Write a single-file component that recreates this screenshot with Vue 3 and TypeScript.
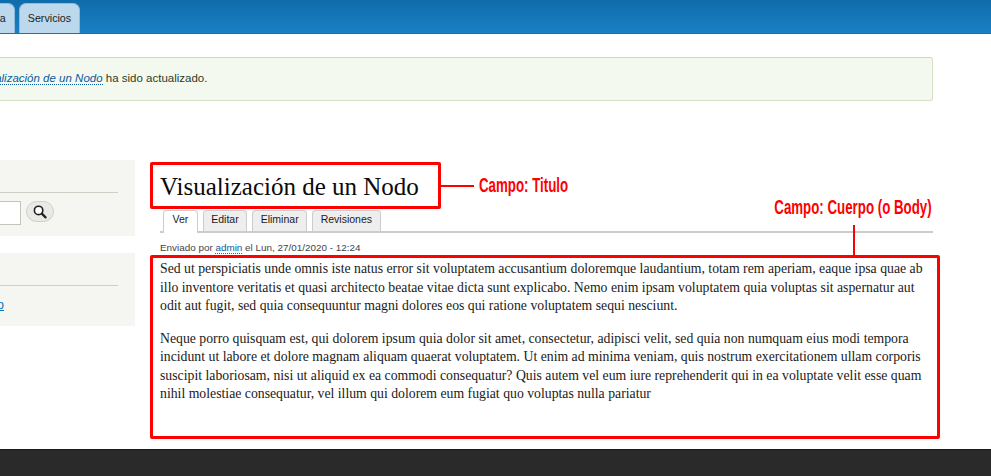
<script setup lang="ts">
const tabs: string[] = ['Ver', 'Editar', 'Eliminar', 'Revisiones']
const p1: string[] = [
  'Sed ut perspiciatis unde omnis iste natus error sit voluptatem accusantium doloremque laudantium, totam rem aperiam, eaque ipsa quae ab',
  'illo inventore veritatis et quasi architecto beatae vitae dicta sunt explicabo. Nemo enim ipsam voluptatem quia voluptas sit aspernatur aut',
  'odit aut fugit, sed quia consequuntur magni dolores eos qui ratione voluptatem sequi nesciunt.'
]
const p2: string[] = [
  'Neque porro quisquam est, qui dolorem ipsum quia dolor sit amet, consectetur, adipisci velit, sed quia non numquam eius modi tempora',
  'incidunt ut labore et dolore magnam aliquam quaerat voluptatem. Ut enim ad minima veniam, quis nostrum exercitationem ullam corporis',
  'suscipit laboriosam, nisi ut aliquid ex ea commodi consequatur? Quis autem vel eum iure reprehenderit qui in ea voluptate velit esse quam',
  'nihil molestiae consequatur, vel illum qui dolorem eum fugiat quo voluptas nulla pariatur'
]
</script>

<template>
  <div class="page">
    <header class="top">
      <nav class="nav">
        <a class="nav-tab">Empresa</a>
        <a class="nav-tab">Servicios</a>
      </nav>
    </header>

    <div class="msg">
      <a class="msg-link">Visualización de un Nodo</a> ha sido actualizado.
    </div>

    <div class="columns">
      <aside class="side">
        <section class="block block-search">
          <div class="rule"></div>
          <div class="search">
            <div class="input"></div>
            <button class="btn" type="button" aria-label="Buscar">
              <svg width="16" height="16" viewBox="0 0 16 16">
                <circle cx="6.6" cy="6.4" r="4.2" fill="#fff" stroke="#222" stroke-width="1.6" />
                <path d="M9.8 9.6 L13.6 13.4" stroke="#222" stroke-width="2.2" stroke-linecap="round" />
              </svg>
            </button>
          </div>
        </section>
        <section class="block block-menu">
          <div class="rule"></div>
          <a class="side-link">Nuevo</a>
        </section>
      </aside>

      <main class="main">
        <div class="title-row">
          <h1 class="title">Visualización de un Nodo</h1>
          <span class="dash"></span>
          <span class="note note-title">Campo: Titulo</span>
        </div>
        <ul class="tabs">
          <li v-for="(t, i) in tabs" :key="t" class="tab" :class="{ active: i === 0 }">{{ t }}</li>
        </ul>
        <div class="meta">Enviado por <a class="author">admin</a> el Lun, 27/01/2020 - 12:24</div>
        <article class="body">
          <p v-for="l in [p1, p2]" :key="l[0]" class="para">
            <span v-for="s in l" :key="s" class="line">{{ s }}</span>
          </p>
        </article>
        <span class="note note-body">Campo: Cuerpo (o Body)</span>
        <span class="stem"></span>
      </main>
    </div>

    <footer class="foot"></footer>
  </div>
</template>

<style>
html, body { margin: 0; background: #fff; overflow: hidden; }
</style>

<style scoped>
.page {
  width: 991px;
  height: 476px;
  overflow: hidden;
  display: flex;
  flex-direction: column;
  font-family: "Liberation Sans", Arial, sans-serif;
  background: #fff;
}
.top {
  height: 34px;
  flex: none;
  box-sizing: border-box;
  background: linear-gradient(#0f6cab, #1a80c3);
  border-bottom: 1px solid #1673b0;
}
.nav {
  display: flex;
  gap: 4px;
  margin-left: -46px;
  padding-top: 3px;
}
.nav-tab {
  box-sizing: border-box;
  height: 30px;
  padding: 8px 8px 0;
  font-size: 10.7px;
  line-height: 13px;
  color: #222;
  background: #bcd8ec;
  border: 1px solid #8fbcdc;
  border-bottom: 0;
  border-radius: 7px 7px 0 0;
}
.msg {
  flex: none;
  box-sizing: border-box;
  margin: 23px 58px 0 -60px;
  height: 44px;
  padding: 13px 0 0 32px;
  font-size: 11.5px;
  line-height: 15px;
  color: #2f3a1e;
  background: #f3f9ef;
  border: 1px solid #d4e0c6;
  border-top-color: #cdd8bf;
  border-radius: 3px;
}
.msg-link {
  color: #0a5aa0;
  font-style: italic;
  border-bottom: 1px dotted #0a5aa0;
}
.columns {
  flex: 1;
  display: flex;
  margin-top: 59px;
  min-height: 0;
}
.side {
  flex: none;
  width: 215px;
  margin-left: -80px;
  display: flex;
  flex-direction: column;
  gap: 17px;
}
.block {
  box-sizing: border-box;
  background: #f5f5f1;
  padding: 32px 17px 0 20px;
}
.block-search { height: 76px; }
.block-menu { height: 73px; }
.rule { height: 1px; background: #cfcfc6; }
.search {
  display: flex;
  align-items: flex-start;
  justify-content: flex-end;
  gap: 5px;
  margin-top: 8px;
}
.input {
  width: 60px;
  height: 24px;
  box-sizing: border-box;
  background: #fff;
  border: 1px solid #c4c4bc;
}
.btn {
  width: 28px;
  height: 21px;
  margin-right: 64px;
  padding: 0;
  display: flex;
  align-items: center;
  justify-content: center;
  background: #e9e9e6;
  border: 1px solid #cfcfca;
  border-radius: 11px;
}
.block-menu .rule { margin-bottom: 11px; }
.side-link {
  display: block;
  text-align: right;
  margin-right: 114px;
  font-size: 13px;
  line-height: 15px;
  color: #0a78c0;
  text-decoration: underline;
}
.main {
  position: relative;
  flex: none;
  width: 790px;
  margin-left: 15px;
}
.title-row {
  display: flex;
  align-items: center;
  margin-top: 2px;
  height: 47px;
}
.title {
  flex: none;
  box-sizing: border-box;
  width: 291px;
  height: 47px;
  margin: 0;
  padding: 7px 0 0 7px;
  border: 3px solid #f00;
  border-radius: 2px;
  font-family: "Liberation Serif", Georgia, serif;
  font-size: 25px;
  line-height: 30px;
  font-weight: 400;
  color: #0a0a0a;
  white-space: nowrap;
}
.dash {
  flex: none;
  width: 33px;
  height: 2px;
  background: #f00;
}
.note {
  font-family: "Liberation Sans", sans-serif;
  font-size: 20px;
  line-height: 23px;
  font-weight: 700;
  color: #f00;
  white-space: nowrap;
}
.note-title {
  margin-left: 5px;
  transform: scaleX(0.665);
  transform-origin: left center;
}
.note-body {
  position: absolute;
  right: 8px;
  top: 36px;
  transform: scaleX(0.665);
  transform-origin: right center;
}
.stem {
  position: absolute;
  left: 703px;
  top: 65px;
  width: 2px;
  height: 30px;
  background: #f00;
}
.tabs {
  list-style: none;
  margin: 1px 0 0 10px;
  width: 773px;
  padding: 0 0 0 3px;
  display: flex;
  gap: 5px;
  box-sizing: border-box;
  height: 23px;
  border-bottom: 2px solid #ccc;
}
.tab {
  box-sizing: border-box;
  height: 21px;
  padding: 1px 7.5px 0;
  font-size: 10.5px;
  line-height: 15px;
  color: #1a1a1a;
  background: #eee;
  border: 1px solid #ccc;
  border-bottom: 0;
  border-radius: 4px 4px 0 0;
}
.tab.active {
  height: 23px;
  background: #fff;
  padding: 1px 8.5px 0;
}
.meta {
  margin: 8px 0 0 10px;
  font-size: 9.9px;
  line-height: 14px;
  color: #444;
}
.author {
  color: #0a5aa0;
  border-bottom: 1px dotted #0a78c0;
}
.body {
  box-sizing: border-box;
  width: 790px;
  height: 184px;
  margin-top: 0;
  padding: 2px 0 0 7px;
  border: 3px solid #f00;
  border-radius: 2px;
  font-family: "Liberation Serif", Georgia, serif;
  font-size: 13.76px;
  line-height: 18.5px;
  color: #1a1a1a;
}
.para { margin: 0 0 14px; }
.line { display: block; white-space: nowrap; }
.foot {
  flex: none;
  height: 27px;
  background: #2a2a2a;
  border-top: 1px solid #1a1a1a;
  box-sizing: border-box;
}
</style>
